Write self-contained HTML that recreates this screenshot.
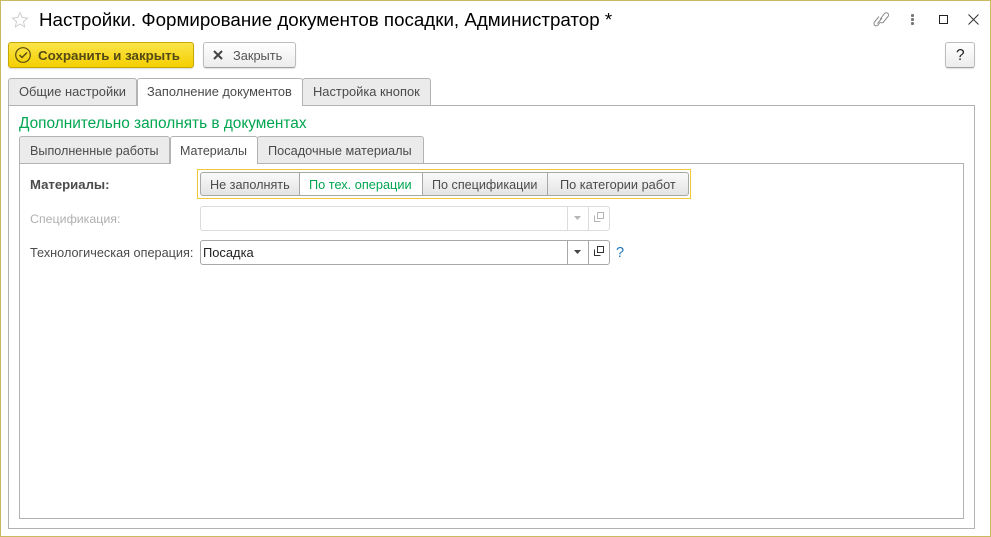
<!DOCTYPE html>
<html lang="ru">
<head>
<meta charset="utf-8">
<style>
html,body{margin:0;padding:0;width:991px;height:537px;overflow:hidden;background:#fff}
body{font-family:"Liberation Sans",Arial,sans-serif;font-size:12.7px;color:#4b4b4b;position:relative}
.a{position:absolute;box-sizing:border-box;white-space:nowrap}
.t{position:absolute;white-space:nowrap;line-height:16px}
.tab{position:absolute;box-sizing:border-box;background:#ebebeb;border:1px solid #b3b3b3;border-bottom:none;border-radius:3px 3px 0 0;height:27px}
.tab.on{background:#fff;z-index:3;height:28px}
.panel{position:absolute;box-sizing:border-box;border:1px solid #b3b3b3;background:#fff}
.btn{position:absolute;box-sizing:border-box;height:26px;border:1px solid #bdbdbd;border-bottom-color:#a0a0a0;border-radius:3px;background:linear-gradient(#fff,#ececec);box-shadow:0 1px 1px rgba(0,0,0,.12)}
.seg{position:absolute;box-sizing:border-box;height:24px;top:172px;background:linear-gradient(#fafafa,#e4e4e4);border:1px solid #a8a8a8}
</style>
</head>
<body>
<div class="a" style="left:0;top:0;width:991px;height:537px;border:1px solid #c9b95f"></div>

<svg class="a" style="left:11px;top:11px" width="18" height="18" viewBox="0 0 18 18"><path d="M9 1.500l2.200 5 5.300.5-4 3.600 1.200 5.300L9 13.100l-4.700 2.800 1.200-5.300-4-3.600 5.300-.5z" fill="none" stroke="#cfcfcf" stroke-width="1"/></svg>
<div class="t" style="left:39px;top:9px;font-size:18.75px;line-height:22px;color:#000">Настройки. Формирование документов посадки, Администратор *</div>

<svg class="a" style="left:872px;top:10px" width="18" height="18" viewBox="0 0 18 18" fill="none" stroke="#8c8c8c" stroke-width="1"><path d="M8 9.500l4.500-6a2.300 2.300 0 0 1 3.500 3l-4.500 5.500a2.300 2.300 0 0 1-3.300.2"/><path d="M10 8l-4.500 5.500 M7 6.500l-4.500 5.500a2.300 2.300 0 0 0 .3 3.300 2.300 2.300 0 0 0 3.200-.3l2-2.500"/></svg>
<svg class="a" style="left:908px;top:13px" width="10" height="14" viewBox="0 0 10 14" fill="#777"><rect x="3" y="1" width="3" height="3" rx="1"/><rect x="3" y="5" width="3" height="3" rx="1"/><rect x="3" y="9" width="3" height="3" rx="1"/></svg>
<div class="a" style="left:939px;top:15px;width:9px;height:9px;border:1px solid #222"></div>
<svg class="a" style="left:968px;top:14px" width="11" height="11" viewBox="0 0 11 11" stroke="#333" stroke-width="1"><path d="M.5.5l10 10M10.500.5l-10 10"/></svg>

<div class="a" style="left:8px;top:42px;width:186px;height:26px;background:linear-gradient(#fbe44a,#f4cf00);border:1px solid #c7a800;border-radius:3px;box-shadow:0 1px 1px rgba(0,0,0,.15)"></div>
<svg class="a" style="left:14px;top:46px" width="18" height="18" viewBox="0 0 18 18" fill="none" stroke="#5a4d10" stroke-width="1.200"><circle cx="9" cy="9" r="7.300"/><path d="M5.500 9l2.500 2.500 5-5" stroke-width="1.500"/></svg>
<div class="t" style="left:38px;top:48px;font-size:13.35px;font-weight:bold;color:#544a16">Сохранить и закрыть</div>

<div class="btn" style="left:203px;top:42px;width:93px"></div>
<svg class="a" style="left:213px;top:50px" width="10" height="10" viewBox="0 0 10 10" stroke="#444" stroke-width="2"><path d="M1 1l8 8M9 1l-8 8"/></svg>
<div class="t" style="left:233px;top:48px;font-size:12.8px;color:#555">Закрыть</div>

<div class="btn" style="left:945px;top:42px;width:30px"></div>
<div class="t" style="left:956px;top:47px;font-size:15.5px;color:#222;line-height:18px">?</div>

<div class="panel" style="left:8px;top:105px;width:967px;height:424px"></div>
<div class="tab" style="left:8px;top:78px;width:129px"></div>
<div class="tab on" style="left:137px;top:78px;width:166px"></div>
<div class="tab" style="left:302px;top:78px;width:129px"></div>
<div class="t" style="left:19px;top:84px;z-index:4;font-size:12.9px">Общие настройки</div>
<div class="t" style="left:147px;top:84px;z-index:4;font-size:12.85px">Заполнение документов</div>
<div class="t" style="left:313px;top:84px;z-index:4;font-size:12.9px">Настройка кнопок</div>

<div class="t" style="left:19px;top:115px;font-size:15.4px;line-height:18px;color:#00a650">Дополнительно заполнять в документах</div>

<div class="panel" style="left:19px;top:163px;width:945px;height:356px"></div>
<div class="tab" style="left:19px;top:136px;width:151px"></div>
<div class="tab on" style="left:170px;top:136px;width:88px"></div>
<div class="tab" style="left:257px;top:136px;width:167px"></div>
<div class="t" style="left:30px;top:143px;z-index:4;font-size:12.6px">Выполненные работы</div>
<div class="t" style="left:180px;top:143px;z-index:4;font-size:12.5px">Материалы</div>
<div class="t" style="left:268px;top:143px;z-index:4;font-size:12.75px">Посадочные материалы</div>

<div class="t" style="left:30px;top:177px;font-size:13.15px;font-weight:bold">Материалы:</div>
<div class="a" style="left:197px;top:169px;width:494px;height:30px;border:1px solid #f0c83c"></div>
<div class="seg" style="left:200px;width:100px;border-radius:3px 0 0 3px"></div>
<div class="seg" style="left:299px;width:124px;background:#fff"></div>
<div class="seg" style="left:422px;width:126px"></div>
<div class="seg" style="left:547px;width:142px;border-radius:0 3px 3px 0"></div>
<div class="t" style="left:210px;top:177px;font-size:12.65px">Не заполнять</div>
<div class="t" style="left:309px;top:177px;font-size:12.75px;color:#00a650">По тех. операции</div>
<div class="t" style="left:432px;top:177px;font-size:12.6px">По спецификации</div>
<div class="t" style="left:560px;top:177px;font-size:12.75px">По категории работ</div>

<div class="t" style="left:30px;top:211px;font-size:12.4px;color:#b0b0b0">Спецификация:</div>
<div class="a" style="left:200px;top:206px;width:410px;height:25px;border:1px solid #dcdcdc;border-radius:3px"></div>
<div class="a" style="left:567px;top:207px;width:1px;height:23px;background:#dcdcdc"></div>
<div class="a" style="left:588px;top:207px;width:1px;height:23px;background:#dcdcdc"></div>
<svg class="a" style="left:574px;top:216px" width="7" height="4"><path d="M0 0h7L3.500 4z" fill="#b5b5b5"/></svg>
<svg class="a" style="left:594px;top:212px" width="11" height="11" viewBox="0 0 11 11" fill="none" stroke="#b5b5b5"><path d="M3.500.5h6v6h-6zM.5 3.500v6h6"/></svg>

<div class="t" style="left:30px;top:245px;font-size:12.7px">Технологическая операция:</div>
<div class="a" style="left:200px;top:240px;width:410px;height:25px;border:1px solid #a8a8a8;border-radius:3px"></div>
<div class="a" style="left:567px;top:241px;width:1px;height:23px;background:#a8a8a8"></div>
<div class="a" style="left:588px;top:241px;width:1px;height:23px;background:#a8a8a8"></div>
<svg class="a" style="left:574px;top:250px" width="7" height="4"><path d="M0 0h7L3.500 4z" fill="#444"/></svg>
<svg class="a" style="left:594px;top:246px" width="11" height="11" viewBox="0 0 11 11" fill="none" stroke="#333"><path d="M3.500.5h6v6h-6zM.5 3.500v6h6"/></svg>
<div class="t" style="left:203px;top:245px;font-size:12.9px;color:#222">Посадка</div>
<div class="t" style="left:616px;top:245px;font-size:14.5px;color:#1f74b8">?</div>
</body>
</html>
